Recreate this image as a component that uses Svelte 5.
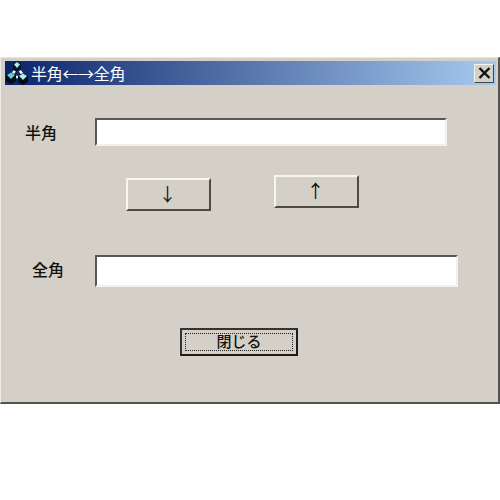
<script>
  let hankaku = $state('');
  let zenkaku = $state('');
</script>

<div class="page">
  <div class="window">
    <div class="titlebar">
      <svg class="app-icon" width="24" height="24" viewBox="0 0 24 24">
        <path d="M12 6 L7 14 M12 6 L18 14 M8 16 H18" stroke="#f0f5f8" stroke-width="2.6" fill="none" />
        <path d="M8 3 L12 0 L16 3 V9 L12 11 L8 9 Z" fill="#0a1620" />
        <path d="M9 3.5 L12 1 L15 3.5 L12 7 Z" fill="#a8eef0" />
        <path d="M1 14 L6 11 L11 14 V20 L6 23 L1 20 Z" fill="#050c14" />
        <path d="M2 14 L6 11.5 L10 14 L6 18 Z" fill="#62d0dc" />
        <path d="M13 15 L18 12 L23 15 V21 L18 24 L13 21 Z" fill="#050c14" />
        <path d="M14 15 L18 12.5 L22 15 L18 19 Z" fill="#a8eef0" />
      </svg>
      <span class="title">半角←→全角</span>
      <button class="close-x" aria-label="close">
        <svg width="13" height="12" viewBox="0 0 13 12">
          <path d="M1.5 1 L11.5 11 M11.5 1 L1.5 11" stroke="#111" stroke-width="2.4" />
        </svg>
      </button>
    </div>

    <div class="body">
      <div class="row first">
        <label class="lbl" for="han">半角</label>
        <input id="han" class="field" bind:value={hankaku} />
      </div>

      <div class="arrows">
        <button class="btn down">↓</button>
        <button class="btn up">↑</button>
      </div>

      <div class="row second">
        <label class="lbl" for="zen">全角</label>
        <input id="zen" class="field" bind:value={zenkaku} />
      </div>

      <div class="footer">
        <button class="close-btn"><span>閉じる</span></button>
      </div>
    </div>
  </div>
</div>

<style>
  :global(body) {
    background: #fff;
  }

  .page {
    width: 500px;
    height: 500px;
    padding-top: 57px;
    box-sizing: border-box;
    font-family: "Noto Sans CJK JP", "Liberation Sans", sans-serif;
  }

  .window {
    box-sizing: border-box;
    width: 500px;
    height: 347px;
    padding: 3px 4px 0;
    background: #d4d0c8;
    border-top: 1px solid #e8e6e0;
    border-left: 1px solid #eeece6;
    border-right: 2px solid #55534f;
    border-bottom: 2px solid #55534f;
  }

  .titlebar {
    height: 24px;
    margin-right: -2px;
    display: flex;
    align-items: center;
    background: linear-gradient(to right, #0a246a, #a6caf0);
  }

  .app-icon {
    flex: none;
  }

  .title {
    margin-left: 2px;
    color: #fff;
    font-size: 16px;
    letter-spacing: -0.3px;
    line-height: 24px;
  }

  .close-x {
    margin-left: auto;
    margin-right: 2px;
    width: 20px;
    height: 19px;
    padding: 0;
    display: flex;
    align-items: center;
    justify-content: center;
    background: #d4d0c8;
    border: 1px solid;
    border-color: #f4f3ef #444 #444 #f4f3ef;
  }

  .body {
    display: flex;
    flex-direction: column;
  }

  .row {
    display: flex;
    align-items: center;
  }

  .first {
    margin-top: 33px;
  }

  .second {
    margin-top: 44px;
  }

  .lbl {
    width: 90px;
    box-sizing: border-box;
    font-size: 16px;
    font-weight: 500;
    color: #111;
  }

  .first .lbl {
    padding-left: 20px;
  }

  .second .lbl {
    padding-left: 27px;
    padding-bottom: 4px;
  }

  .field {
    box-sizing: border-box;
    height: 28px;
    padding: 0;
    background: #fff;
    border: 2px solid;
    border-color: #5a5855 #f2f1ec #f2f1ec #5a5855;
    outline: none;
  }

  .first .field {
    width: 352px;
  }

  .second .field {
    width: 363px;
    height: 32px;
  }

  .arrows {
    display: flex;
    align-items: flex-start;
    margin-top: 29px;
    padding-left: 121px;
    gap: 63px;
  }

  .btn {
    box-sizing: border-box;
    width: 85px;
    height: 33px;
    padding: 0 2px 3px 0;
    font-family: inherit;
    font-size: 18px;
    color: #111;
    background: #d4d0c8;
    border: 2px solid;
    border-color: #f6f5f0 #4c4a47 #4c4a47 #f6f5f0;
  }

  .down {
    margin-top: 3px;
  }

  .footer {
    margin-top: 41px;
    padding-left: 175px;
  }

  .close-btn {
    box-sizing: border-box;
    width: 118px;
    height: 28px;
    padding: 3px;
    font-family: inherit;
    color: #111;
    background: #d4d0c8;
    border: 2px solid;
    border-color: #333 #1c1c1c #1c1c1c #333;
  }

  .close-btn span {
    display: block;
    box-sizing: border-box;
    height: 100%;
    font-size: 15px;
    font-weight: 500;
    line-height: 13px;
    border: 1px dotted #222;
  }
</style>
